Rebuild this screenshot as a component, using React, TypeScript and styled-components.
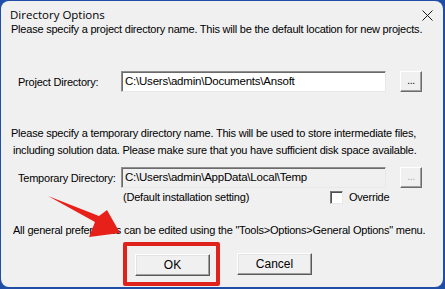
import React from "react";
import styled, { createGlobalStyle } from "styled-components";

const Global = createGlobalStyle`
  html, body { margin: 0; padding: 0; }
  body {
    width: 445px;
    height: 289px;
    overflow: hidden;
    background: #1f4ea6;
  }
`;

const Page = styled.div`
  position: relative;
  width: 445px;
  height: 289px;
  padding: 1px 2px 2px 1px;
  box-sizing: border-box;
`;

const Window = styled.div`
  height: 100%;
  background: #f0f0f0;
  border-radius: 8px;
  box-sizing: border-box;
  padding-top: 8px;
  display: flex;
  flex-direction: column;
  font-family: "Liberation Sans", Arial, sans-serif;
  font-size: 11px;
  letter-spacing: -0.22px;
  color: #000;
`;

const TitleBar = styled.div`
  display: flex;
  align-items: center;
  justify-content: space-between;
  height: 12px;
  padding: 0 10px 0 9px;
`;

const Title = styled.span`
  font-family: "Open Sans", "Noto Sans", sans-serif;
  font-size: 11.5px;
  letter-spacing: 0;
  line-height: 12px;
`;

const Close = styled.svg`
  width: 11px;
  height: 11px;
`;

const Para = styled.div<{ $mt: number; $lh?: number }>`
  margin-top: ${(p) => p.$mt}px;
  padding-left: 10px;
  line-height: ${(p) => p.$lh ?? 14}px;
  white-space: nowrap;
`;

const Indented = styled.span`
  display: block;
  padding-left: 2px;
`;

const FieldRow = styled.div<{ $mt: number }>`
  display: flex;
  align-items: center;
  margin-top: ${(p) => p.$mt}px;
  height: 21px;
`;

const Label = styled.div<{ $w: number; $pl: number }>`
  width: ${(p) => p.$w}px;
  padding-left: ${(p) => p.$pl}px;
  box-sizing: border-box;
  flex: none;
  white-space: nowrap;
`;

const Field = styled.div<{ $disabled?: boolean }>`
  width: 265px;
  height: 21px;
  box-sizing: border-box;
  border-style: solid;
  border-width: 1px;
  border-color: #8f8f8f #e8e8e8 #e8e8e8 #8f8f8f;
  box-shadow: inset 1px 1px 0 #6b6b6b;
  background: ${(p) => (p.$disabled ? "#f0f0f0" : "#ffffff")};
  padding: 2px 0 0 3px;
  line-height: 15px;
  font-size: 11.5px;
  white-space: nowrap;
  overflow: hidden;
`;

const Browse = styled.div<{ $disabled?: boolean }>`
  margin-left: 14px;
  width: 22px;
  height: 21px;
  box-sizing: border-box;
  border-style: solid;
  border-width: 1px;
  border-color: #ffffff #6b6b6b #6b6b6b #ffffff;
  box-shadow: inset -1px -1px 0 #a0a0a0;
  display: flex;
  align-items: center;
  justify-content: center;
  font-size: 10px;
  line-height: 10px;
  color: ${(p) => (p.$disabled ? "#a8a8a8" : "#000")};
  padding-bottom: 2px;
`;

const OptionRow = styled.div`
  display: flex;
  align-items: center;
  margin-top: 2px;
  height: 14px;
  line-height: 14px;
`;

const Hint = styled.div`
  padding-left: 122px;
  width: 329px;
  box-sizing: border-box;
  flex: none;
`;

const Check = styled.div`
  width: 13px;
  height: 13px;
  box-sizing: border-box;
  background: #fff;
  border-style: solid;
  border-width: 1px;
  border-color: #7a7a7a #e8e8e8 #e8e8e8 #7a7a7a;
  box-shadow: inset 1px 1px 0 #505050;
  margin-right: 6px;
`;

const ButtonRow = styled.div`
  display: flex;
  align-items: center;
  margin-top: 5px;
  padding-left: 122px;
  gap: 17px;
`;

const Highlight = styled.div`
  border: 4px solid #e0221d;
  border-radius: 2px;
  padding: 8px 6px 6px 8px;
`;

const Button = styled.div`
  width: 75px;
  height: 22px;
  box-sizing: border-box;
  border-style: solid;
  border-width: 1px;
  border-color: #ffffff #5a5a5a #5a5a5a #ffffff;
  box-shadow: inset -1px -1px 0 #a0a0a0, inset 1px 1px 0 #e3e3e3;
  display: flex;
  align-items: center;
  justify-content: center;
  background: #f0f0f0;
  font-size: 12px;
  letter-spacing: 0;
`;

const Arrow = styled.svg`
  position: absolute;
  left: 0;
  top: 0;
  width: 445px;
  height: 289px;
  pointer-events: none;
`;

export default function App() {
  return (
    <Page>
      <Global />
      <Window>
        <TitleBar>
          <Title>Directory Options</Title>
          <Close viewBox="0 0 11 11">
            <path d="M0.5 0.5 L10.5 10.5 M10.5 0.5 L0.5 10.5" stroke="#1a1a1a" strokeWidth="1" fill="none" />
          </Close>
        </TitleBar>
        <Para $mt={1}>
          Please specify a project directory name. This will be the default location for new projects.
        </Para>
        <FieldRow $mt={35}>
          <Label $w={120} $pl={17}>Project Directory:</Label>
          <Field>C:\Users\admin\Documents\Ansoft</Field>
          <Browse>...</Browse>
        </FieldRow>
        <Para $mt={33} $lh={17}>
          Please specify a temporary directory name. This will be used to store intermediate files,
          <Indented>
            including solution data. Please make sure that you have sufficient disk space available.
          </Indented>
        </Para>
        <FieldRow $mt={8}>
          <Label $w={120} $pl={17}>Temporary Directory:</Label>
          <Field $disabled>C:\Users\admin\AppData\Local\Temp</Field>
          <Browse $disabled>...</Browse>
        </FieldRow>
        <OptionRow>
          <Hint>(Default installation setting)</Hint>
          <Check />
          <span>Override</span>
        </OptionRow>
        <Para $mt={19}>
          <Indented>All general preferences can be edited using the "Tools&gt;Options&gt;General Options" menu.</Indented>
        </Para>
        <ButtonRow>
          <Highlight>
            <Button>OK</Button>
          </Highlight>
          <Button>Cancel</Button>
        </ButtonRow>
      </Window>
      <Arrow viewBox="0 0 445 289">
        <polygon points="48,196 99,216 107,210 120,233 89,237 95,222" fill="#e8201a" />
      </Arrow>
    </Page>
  );
}
